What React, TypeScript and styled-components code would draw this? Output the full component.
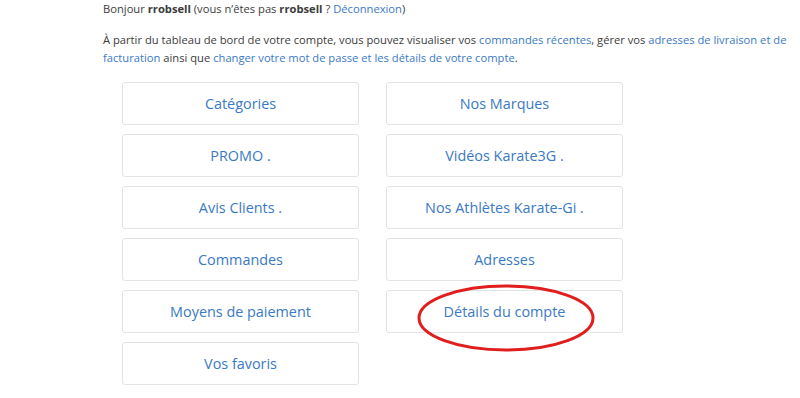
import styled, { createGlobalStyle } from 'styled-components';

const GlobalStyle = createGlobalStyle`
  html, body {
    margin: 0;
    padding: 0;
    background: #ffffff;
  }
  body {
    font-family: "Open Sans", "Liberation Sans", sans-serif;
    color: #3c3c3c;
    font-size: 11.2px;
    line-height: 18px;
  }
`;

const Page = styled.div`
  width: 800px;
  height: 398px;
  overflow: hidden;
  padding-left: 103px;
  box-sizing: border-box;
`;

const Content = styled.div`
  width: 690px;
  position: relative;
`;

const Text = styled.p<{ $gap?: number }>`
  margin: 0 0 ${(p) => p.$gap ?? 0}px;
`;

const Link = styled.a`
  color: #3a79c4;
  text-decoration: none;
`;

const Grid = styled.nav`
  display: grid;
  grid-template-columns: 237px 237px;
  column-gap: 27px;
  row-gap: 9px;
  margin-left: 19px;
  margin-top: 15px;
`;

const Tile = styled.a`
  display: flex;
  align-items: center;
  justify-content: center;
  height: 43px;
  box-sizing: border-box;
  border: 1px solid #e3e3e3;
  border-radius: 3px;
  color: #3a79c4;
  font-size: 14.4px;
  text-decoration: none;
  padding-top: 1px;
`;

const Circle = styled.svg`
  position: absolute;
  left: 312px;
  top: 282px;
  overflow: visible;
`;

const tiles = [
  'Catégories',
  'Nos Marques',
  'PROMO .',
  'Vidéos Karate3G .',
  'Avis Clients .',
  'Nos Athlètes Karate-Gi .',
  'Commandes',
  'Adresses',
  'Moyens de paiement',
  'Détails du compte',
  'Vos favoris',
];

export default function App() {
  return (
    <Page>
      <GlobalStyle />
      <Content>
        <Text $gap={13}>
          Bonjour <strong>rrobsell</strong> (vous n’êtes pas <strong>rrobsell</strong> ?{' '}
          <Link href="#">Déconnexion</Link>)
        </Text>
        <Text>
          À partir du tableau de bord de votre compte, vous pouvez visualiser vos{' '}
          <Link href="#">commandes récentes</Link>, gérer vos{' '}
          <Link href="#">adresses de livraison et de facturation</Link> ainsi que{' '}
          <Link href="#">changer votre mot de passe et les détails de votre compte</Link>.
        </Text>
        <Grid>
          {tiles.map((t) => (
            <Tile key={t} href="#">
              {t}
            </Tile>
          ))}
        </Grid>
        <Circle width="180" height="70" viewBox="0 0 180 70">
          <ellipse cx="91" cy="36" rx="87" ry="32" fill="none" stroke="#e01e1e" strokeWidth="3" />
        </Circle>
      </Content>
    </Page>
  );
}
